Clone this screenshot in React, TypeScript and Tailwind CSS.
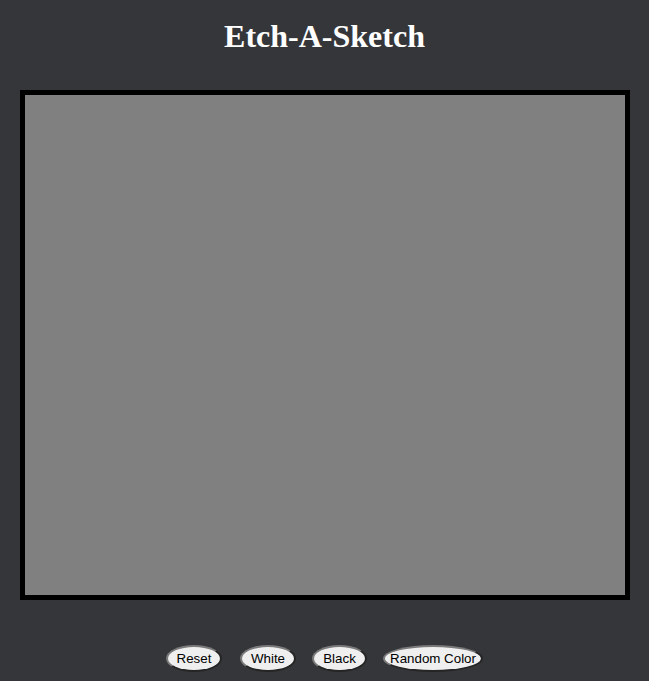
import React from 'react';

const buttons = [
    { label: 'Reset', cls: 'w-[56px]' },
    { label: 'White', cls: 'w-[56px] ml-[18px]' },
    { label: 'Black', cls: 'w-[55px] ml-[16px]' },
    { label: 'Random Color', cls: 'w-[100px] ml-[16px]' },
];

const App: React.FC = () => {
    return (
        <div className="min-h-[681px] bg-[#35363a] flex flex-col items-center">
            <h1 className="mt-[18px] text-[32px] leading-[37px] font-bold text-white font-['Liberation_Serif',serif]">
                Etch-A-Sketch
            </h1>

            <div className="mt-[35px] w-[610px] h-[510px] border-[5px] border-black bg-[#808080]" />

            <div className="mt-[45px] flex">
                {buttons.map((b) => (
                    <button
                        key={b.label}
                        className={`${b.cls} h-[27px] rounded-[50%] bg-[#efefef] text-black text-[13.33px] leading-[15px] font-['Liberation_Sans',sans-serif] border-2 border-[#7a7a7a] [border-style:outset] whitespace-nowrap flex items-center justify-center`}
                    >
                        {b.label}
                    </button>
                ))}
            </div>
        </div>
    );
};

export default App;
